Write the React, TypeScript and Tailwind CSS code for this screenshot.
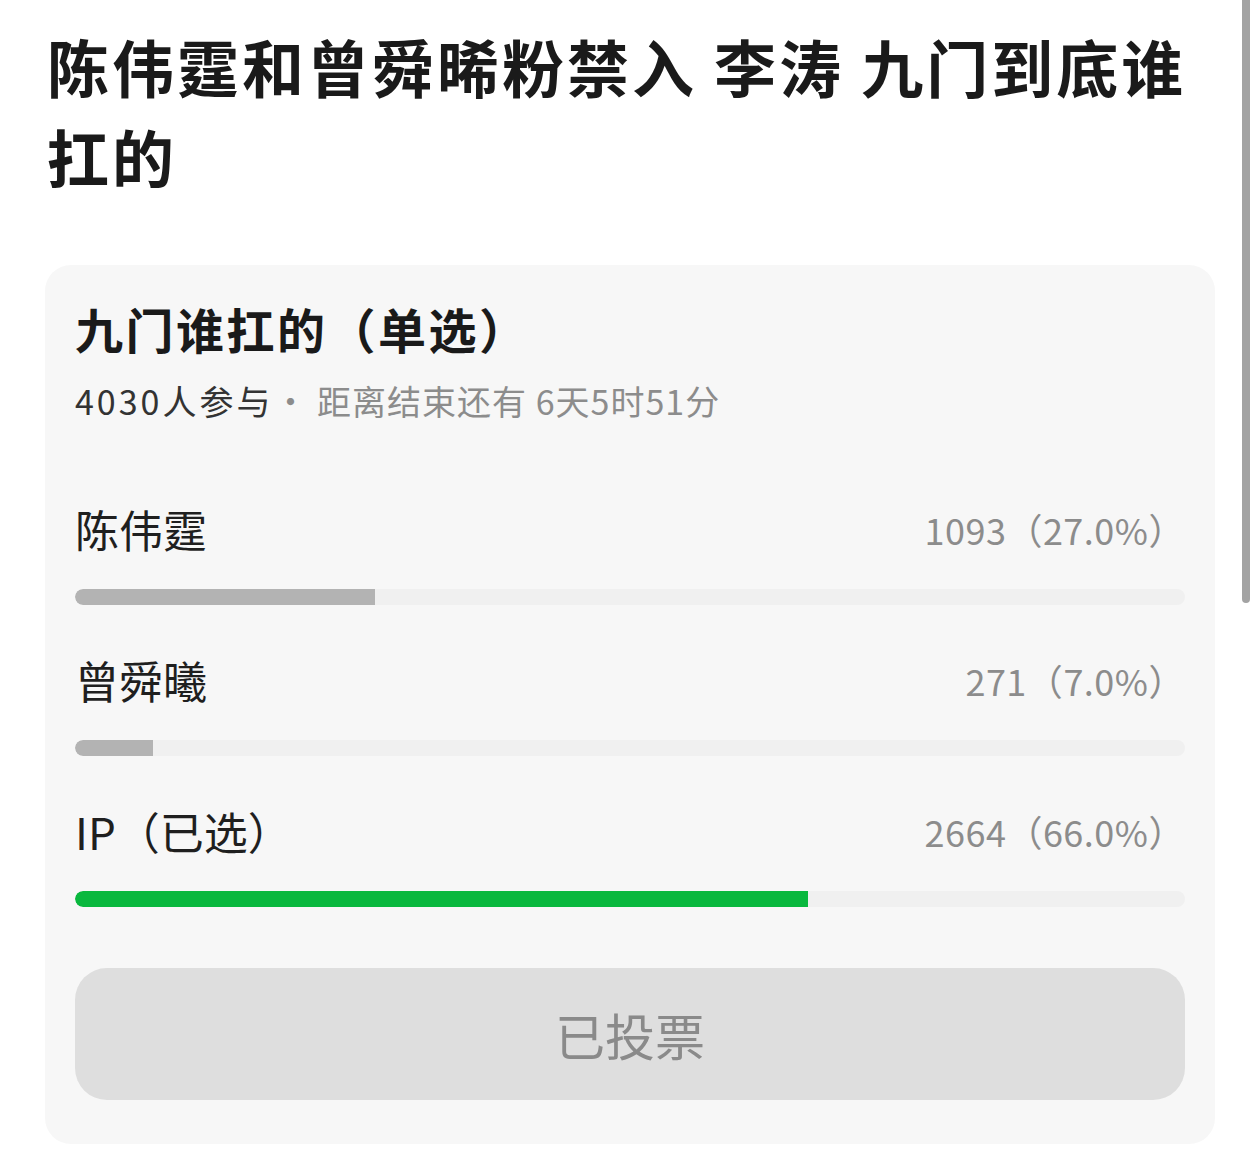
const FONT = {
  fontFamily: '"Noto Sans CJK SC", "Noto Sans", "Liberation Sans", sans-serif',
};

type Option = { label: string; count: number; pct: number; selected?: boolean };

const OPTIONS: Option[] = [
  { label: "陈伟霆", count: 1093, pct: 27 },
  { label: "曾舜曦", count: 271, pct: 7 },
  { label: "IP（已选）", count: 2664, pct: 66, selected: true },
];

function OptionRow({ option, first }: { option: Option; first?: boolean }) {
  return (
    <div className={first ? "mt-[78px]" : "mt-[47px]"}>
      <div className="flex items-center justify-between">
        <span className="text-[44px] leading-[56px] text-[#1f1f1f]">{option.label}</span>
        <span className="text-[36px] leading-[56px] tracking-[0.5px] text-[#8c8c8c]">
          {option.count}（{option.pct.toFixed(1)}%）
        </span>
      </div>
      <div className="mt-[32px] h-[16px] w-full overflow-hidden rounded-full bg-[#f0f0f0]">
        <div
          className={
            option.selected
              ? "h-full rounded-l-full bg-[#09b83e]"
              : "h-full rounded-l-full bg-[#b3b3b3]"
          }
          style={{ width: `${option.pct}%` }}
        />
      </div>
    </div>
  );
}

export default function App() {
  return (
    <div className="relative min-h-[1173px] w-full bg-white" style={FONT}>
      <div className="px-[47px] pt-[21px]">
        <h1 className="text-[62px] font-bold leading-[90px] tracking-[3px] text-[#1a1a1a]">
          陈伟霆和曾舜晞粉禁入 李涛 九门到底谁扛的
        </h1>
      </div>

      <div className="mx-[45px] mt-[64px] w-[1170px] rounded-[26px] bg-[#f7f7f7] px-[30px] pb-[44px] pt-[33px]">
        <h2 className="text-[48px] font-bold leading-[60px] tracking-[2.5px] text-[#1a1a1a]">
          九门谁扛的（单选）
        </h2>
        <p className="mt-[21px] text-[34px] leading-[44px] tracking-[1px]">
          <span className="tracking-[3px] text-[#333333]">4030人参与</span>
          <span className="text-[#8c8c8c]">· 距离结束还有 6天5时51分</span>
        </p>

        {OPTIONS.map((o, i) => (
          <OptionRow key={o.label} option={o} first={i === 0} />
        ))}

        <button className="mt-[61px] flex h-[132px] w-full items-center justify-center rounded-[32px] bg-[#dedede] text-[50px] text-[#8a8a8a]">
          已投票
        </button>
      </div>

      <div className="absolute right-[10px] top-0 h-[603px] w-[8px] rounded-b-full bg-[#a3a3a3]" />
    </div>
  );
}
